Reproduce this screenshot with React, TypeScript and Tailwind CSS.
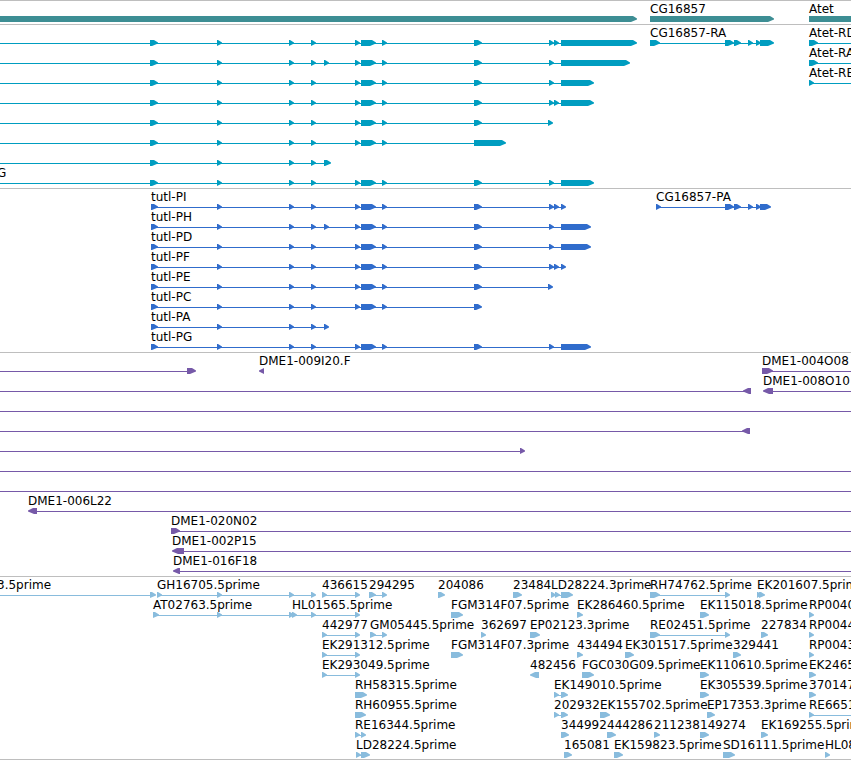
import React from 'react';

type Segment = [number, number];

interface Feature {
  label?: string;
  // where the label starts, when it is not at the first segment
  at?: number;
  line?: Segment;
  segments: Segment[];
  reverse?: boolean;
}

interface Track {
  name: string;
  color: string;
  rows: Feature[][];
}

const HEAD = 5;
const OFF = 2000;

const tss: Segment = [150, 158];
const shared: Segment[] = [[217, 222], [289, 294], [311, 316]];
const middle: Segment[] = [[355, 360], [361, 376], [382, 387]];
const first: Segment = [151, 158];

const mrna = (...tail: Segment[]): Feature => ({
  line: [-10, tail[tail.length - 1][0]],
  segments: [tss, ...shared, ...tail],
});

const cds = (label: string, ...tail: Segment[]): Feature => ({
  label,
  segments: [first, ...shared, ...tail],
});

const est = (label: string, ...segments: Segment[]): Feature => ({ label, segments });

const through: Feature = { line: [-10, OFF], segments: [] };

const tracks: Track[] = [
  {
    name: 'Genes',
    color: '#3d8e94',
    rows: [
      [
        { segments: [[-10, 637]] },
        { label: 'CG16857', segments: [[650, 774]] },
        { label: 'Atet', segments: [[809, OFF]] },
      ],
    ],
  },
  {
    name: 'Transcripts',
    color: '#009dc0',
    rows: [
      [
        mrna(...middle, [474, 482], [549, 554], [554, 559], [561, 637]),
        { label: 'CG16857-RA', segments: [[650, 660], [725, 734], [734, 741], [748, 753], [756, 761], [760, 774]] },
        { label: 'Atet-RD', line: [809, OFF], segments: [[809, 818]] },
      ],
      [
        mrna([324, 329], ...middle, [474, 482], [549, 554], [561, 630]),
        { label: 'Atet-RA', line: [809, OFF], segments: [[809, 818]] },
      ],
      [
        mrna(...middle, [474, 482], [549, 554], [561, 594]),
        { label: 'Atet-RB', line: [809, OFF], segments: [[809, 814]] },
      ],
      [mrna(...middle, [474, 482], [549, 554], [554, 559], [561, 594])],
      [mrna(...middle, [474, 482], [548, 553])],
      [mrna(...middle, [474, 506])],
      [mrna([324, 331])],
      [
        { label: 'G', at: -3, segments: [] },
        mrna(...middle, [474, 482], [549, 554], [561, 594]),
      ],
    ],
  },
  {
    name: 'Coding sequences',
    color: '#306ccc',
    rows: [
      [
        cds('tutl-PI', ...middle, [474, 482], [549, 554], [554, 559], [561, 566]),
        { label: 'CG16857-PA', segments: [[656, 661], [725, 734], [734, 741], [748, 753], [756, 761], [760, 771]] },
      ],
      [cds('tutl-PH', [324, 329], ...middle, [474, 482], [549, 554], [561, 591])],
      [cds('tutl-PD', ...middle, [474, 482], [549, 554], [561, 591])],
      [cds('tutl-PF', ...middle, [474, 482], [549, 554], [554, 559], [561, 566])],
      [cds('tutl-PE', ...middle, [474, 482], [548, 553])],
      [cds('tutl-PC', ...middle, [474, 482])],
      [cds('tutl-PA', [324, 329])],
      [cds('tutl-PG', ...middle, [474, 482], [549, 554], [561, 591])],
    ],
  },
  {
    name: 'BAC ends',
    color: '#7659a8',
    rows: [
      [
        { line: [-10, 187], segments: [[187, 196]] },
        { label: 'DME1-009I20.F', segments: [[259, 264]], reverse: true },
        { label: 'DME1-004O08', line: [762, OFF], segments: [[762, 773]] },
      ],
      [
        { line: [-10, 751], segments: [[743, 751]], reverse: true },
        { label: 'DME1-008O10', line: [768, OFF], segments: [[763, 773]], reverse: true },
      ],
      [through],
      [{ line: [-10, 750], segments: [[742, 750]], reverse: true }],
      [{ line: [-10, 520], segments: [[520, 525]] }],
      [through],
      [through],
      [{ label: 'DME1-006L22', line: [33, OFF], segments: [[28, 37]], reverse: true }],
      [{ label: 'DME1-020N02', line: [171, OFF], segments: [[171, 180]] }],
      [{ label: 'DME1-002P15', line: [177, OFF], segments: [[172, 184]], reverse: true }],
      [{ label: 'DME1-016F18', line: [178, OFF], segments: [[173, 180]], reverse: true }],
    ],
  },
  {
    name: 'ESTs',
    color: '#89bcdd',
    rows: [
      [
        { label: '3.5prime', at: -3, line: [-10, 150], segments: [[150, 156]] },
        est('GH16705.5prime', [157, 162], [217, 222], [289, 294], [311, 316]),
        est('436615', [322, 327], [355, 360]),
        est('294295', [369, 376], [382, 387]),
        est('204086', [438, 445]),
        est('23484', [513, 522]),
        est('LD28224.3prime', [551, 556], [555, 560], [561, 573]),
        est('RH74762.5prime', [650, 660], [725, 730]),
        est('EK201607.5prime', [757, 761], [759, 765]),
      ],
      [
        est('AT02763.5prime', [153, 159], [217, 222], [289, 294]),
        est('HL01565.5prime', [292, 297], [311, 316], [355, 360]),
        est('FGM314F07.5prime', [451, 463]),
        est('EK286460.5prime', [577, 583]),
        est('EK115018.5prime', [700, 709]),
        est('RP00404', [809, 814]),
      ],
      [
        est('442977', [322, 327], [355, 360]),
        est('GM05445.5prime', [370, 376], [382, 387]),
        est('362697', [481, 486]),
        est('EP02123.3prime', [530, 540]),
        est('RE02451.5prime', [650, 660], [725, 730]),
        est('227834', [761, 768]),
        est('RP00445', [809, 814]),
      ],
      [
        est('EK291312.5prime', [322, 327], [355, 360]),
        est('FGM314F07.3prime', [451, 463]),
        est('434494', [577, 583]),
        est('EK301517.5prime', [625, 634]),
        est('329441', [733, 741]),
        est('RP00431', [809, 814]),
      ],
      [
        est('EK293049.5prime', [322, 327], [355, 360]),
        { label: '482456', segments: [[530, 539]], reverse: true },
        est('FGC030G09.5prime', [582, 594]),
        est('EK110610.5prime', [700, 709]),
        est('EK2465', [809, 816]),
      ],
      [
        est('RH58315.5prime', [355, 367]),
        est('EK149010.5prime', [554, 559], [561, 568]),
        est('EK305539.5prime', [700, 709]),
        est('370147', [809, 816]),
      ],
      [
        est('RH60955.5prime', [355, 366]),
        est('202932', [554, 559], [561, 568]),
        est('EK155702.5prime', [600, 610]),
        est('EP17353.3prime', [707, 715]),
        { label: 'RE6651', line: [809, OFF], segments: [[809, 814]] },
      ],
      [
        est('RE16344.5prime', [355, 360], [361, 366]),
        est('344992', [561, 569]),
        est('444286', [607, 616]),
        est('211238', [654, 660]),
        est('149274', [700, 709]),
        est('EK169255.5prime', [761, 768]),
      ],
      [
        est('LD28224.5prime', [356, 361], [361, 370]),
        est('165081', [564, 572]),
        est('EK159823.5prime', [614, 623]),
        est('SD16111.5prime', [723, 735]),
        est('HL081', [825, 830]),
      ],
    ],
  },
];

// the lower edge of a head starts one pixel before the upper one
function arrow([start, end]: Segment, reverse?: boolean) {
  if (reverse) {
    const neck = Math.min(start + HEAD, end);
    const heel = Math.min(neck + 1, end);
    return `M${end} 15H${neck}L${start} 17.5V18.5L${heel} 21H${end}Z`;
  }
  const neck = Math.max(end - HEAD, start);
  const heel = Math.max(neck - 1, start);
  return `M${start} 15H${neck + 1}L${end} 17.5V18.5L${heel} 21H${start}Z`;
}

function FeatureGlyph({ feature, color }: { feature: Feature; color: string }) {
  const { segments, reverse } = feature;
  const line = feature.line ?? (segments.length > 1 ? [segments[0][0], segments[segments.length - 1][0]] : null);

  return (
    <g fill={color}>
      {line && <rect x={line[0]} y={18} width={line[1] - line[0]} height={1} />}
      {segments.map((segment, index) => (
        <path key={index} d={arrow(segment, reverse)} />
      ))}
    </g>
  );
}

function TrackRow({ features, color }: { features: Feature[]; color: string }) {
  return (
    <div className="relative h-5">
      <svg className="absolute inset-0 h-full w-full overflow-visible" aria-hidden="true">
        {features.map((feature, index) => (
          <FeatureGlyph key={index} feature={feature} color={color} />
        ))}
      </svg>
      {features.map((feature, index) =>
        feature.label ? (
          <span
            key={index}
            className="absolute top-0 whitespace-nowrap text-xs"
            style={{ left: feature.at ?? feature.segments[0][0] }}
          >
            {feature.label}
          </span>
        ) : null
      )}
    </div>
  );
}

export default function App() {
  return (
    <main className="w-full overflow-hidden border-b border-[#bebebe] bg-white font-['DejaVu_Sans',sans-serif] text-black">
      {tracks.map((track) => (
        <section
          key={track.name}
          aria-label={track.name}
          className="border-t border-[#bebebe] pb-[3px] last:pb-0.5"
        >
          {track.rows.map((features, index) => (
            <TrackRow key={index} features={features} color={track.color} />
          ))}
        </section>
      ))}
    </main>
  );
}
